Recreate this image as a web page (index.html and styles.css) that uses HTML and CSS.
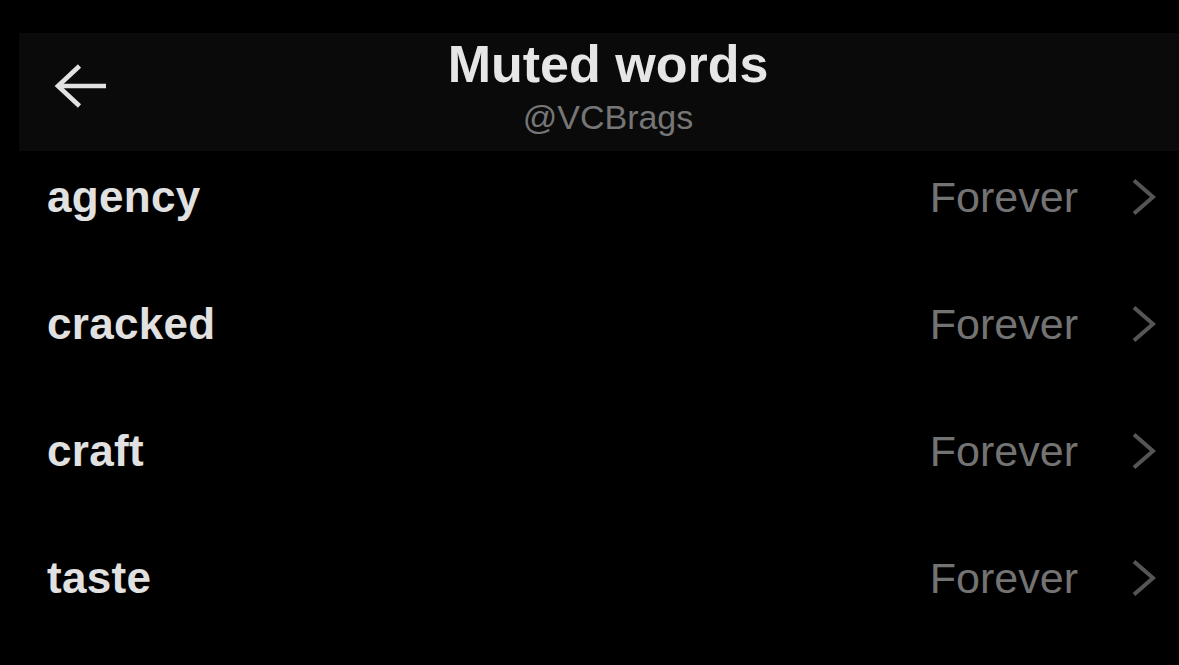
FILE: index.html
```html
<!DOCTYPE html>
<html lang="en">
<head>
<meta charset="utf-8">
<title>Muted words</title>
<link rel="stylesheet" href="styles.css">
</head>
<body>
<div class="page">
  <header class="header">
    <div class="back">
      <svg width="52" height="44" viewBox="0 0 52 44" fill="none" stroke="#e2e2e2" stroke-width="4.6" stroke-linecap="butt" stroke-linejoin="miter">
        <path d="M4 22 H52"/>
        <path d="M25.5 2 L4 22 L25.5 42"/>
      </svg>
    </div>
    <div class="titles">
      <div class="title">Muted words</div>
      <div class="handle">@VCBrags</div>
    </div>
    <div class="spacer"></div>
  </header>
  <ul class="list">
    <li class="row"><span class="word">agency</span><span class="dur">Forever</span><svg class="chev" width="24" height="36" viewBox="0 0 24 36" fill="none" stroke="#555555" stroke-width="4"><path d="M2 1.5 L21 18 L2 34.5"/></svg></li>
    <li class="row"><span class="word">cracked</span><span class="dur">Forever</span><svg class="chev" width="24" height="36" viewBox="0 0 24 36" fill="none" stroke="#555555" stroke-width="4"><path d="M2 1.5 L21 18 L2 34.5"/></svg></li>
    <li class="row"><span class="word">craft</span><span class="dur">Forever</span><svg class="chev" width="24" height="36" viewBox="0 0 24 36" fill="none" stroke="#555555" stroke-width="4"><path d="M2 1.5 L21 18 L2 34.5"/></svg></li>
    <li class="row"><span class="word">taste</span><span class="dur">Forever</span><svg class="chev" width="24" height="36" viewBox="0 0 24 36" fill="none" stroke="#555555" stroke-width="4"><path d="M2 1.5 L21 18 L2 34.5"/></svg></li>
  </ul>
</div>
</body>
</html>
```
FILE: styles.css
```css
html, body {
  margin: 0;
  padding: 0;
  background: #000;
}
body {
  font-family: "Liberation Sans", Arial, sans-serif;
  width: 1179px;
  height: 665px;
  overflow: hidden;
}
.page {
  padding-top: 33px;
}
.header {
  margin-left: 19px;
  background: #0a0a0a;
  display: grid;
  grid-template-columns: 1fr auto 1fr;
  padding: 2px 0 14px 18px;
}
.back {
  align-self: center;
  margin-left: 17px;
  display: flex;
}
.titles {
  text-align: center;
}
.title {
  font-size: 52px;
  line-height: 58px;
  font-weight: 700;
  color: #e6e6e6;
}
.handle {
  margin-top: 4px;
  font-size: 34px;
  line-height: 40px;
  color: #767676;
}
.list {
  list-style: none;
  margin: 0;
  padding: 0;
}
.row {
  display: flex;
  align-items: center;
  height: 127px;
  box-sizing: border-box;
  padding: 21px 23px 56px 47px;
}
.word {
  flex: 1;
  font-size: 44px;
  line-height: 50px;
  font-weight: 700;
  color: #e1e1e1;
  letter-spacing: 0.3px;
}
.dur {
  font-size: 43px;
  line-height: 50px;
  color: #737373;
}
.chev {
  margin-left: 54px;
  display: block;
}
```
